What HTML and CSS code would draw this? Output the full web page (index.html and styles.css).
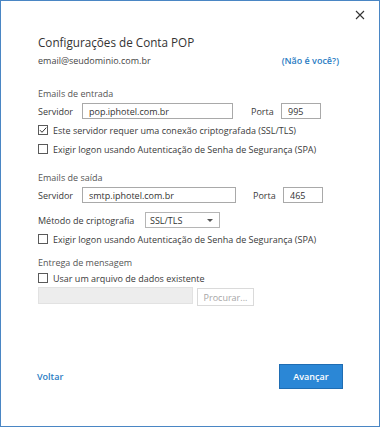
FILE: index.html
```html
<!DOCTYPE html>
<html lang="pt-BR">
<head>
    <meta charset="UTF-8">
    <title>Configurações de Conta POP</title>
    <link rel="stylesheet" href="styles.css">
</head>
<body>
    <div class="dialog">
        <div class="titlebar">
            <button class="close" title="Fechar">
                <svg width="10" height="10" viewBox="0 0 10 10"><path d="M1 1L9 9M9 1L1 9" stroke="#333" stroke-width="1.1" fill="none"/></svg>
            </button>
        </div>

        <div class="content">
            <h1 class="title">Configurações de Conta POP</h1>
            <div class="account">
                <span>email@seudominio.com.br</span>
                <a class="link" href="#">(Não é você?)</a>
            </div>

            <div class="section first">Emails de entrada</div>
            <div class="row">
                <span class="lbl lbl-server">Servidor</span>
                <input class="field field-server" value="pop.iphotel.com.br">
                <span class="lbl lbl-port">Porta</span>
                <input class="field field-port" value="995">
            </div>
            <label class="check">
                <span class="box checked">
                    <svg width="10" height="10" viewBox="0 0 10 10"><path d="M2 5.2L4 7.3L8.3 2.6" stroke="#333" stroke-width="1" fill="none"/></svg>
                </span>
                Este servidor requer uma conexão criptografada (SSL/TLS)
            </label>
            <label class="check">
                <span class="box"></span>
                Exigir logon usando Autenticação de Senha de Segurança (SPA)
            </label>

            <div class="section">Emails de saída</div>
            <div class="row">
                <span class="lbl lbl-server2">Servidor</span>
                <input class="field field-server2" value="smtp.iphotel.com.br">
                <span class="lbl lbl-port2">Porta</span>
                <input class="field field-port" value="465">
            </div>
            <div class="row row-method">
                <span class="lbl lbl-method">Método de criptografia</span>
                <div class="select">
                    <span>SSL/TLS</span>
                    <span class="arrow"></span>
                </div>
            </div>
            <label class="check check-smtp">
                <span class="box"></span>
                Exigir logon usando Autenticação de Senha de Segurança (SPA)
            </label>

            <div class="section section-delivery">Entrega de mensagem</div>
            <label class="check check-file">
                <span class="box"></span>
                Usar um arquivo de dados existente
            </label>
            <div class="file-row">
                <div class="file-path"></div>
                <button class="browse" disabled>Procurar...</button>
            </div>
        </div>

        <div class="footer">
            <a class="link back" href="#">Voltar</a>
            <button class="next">Avançar</button>
        </div>
    </div>
</body>
</html>
```

FILE: styles.css
```css
body {
    margin: 0;
    background: #fff;
    font-family: "Open Sans", "Noto Sans", sans-serif;
    font-size: 9px;
    color: #3a3a3a;
}
.dialog {
    width: 380px;
    height: 427px;
    box-sizing: border-box;
    border: 1px solid #4a86c4;
    background: #fff;
    display: flex;
    flex-direction: column;
}
.titlebar {
    height: 27px;
    display: flex;
    justify-content: flex-end;
    align-items: center;
    padding-right: 9px;
}
.close {
    width: 20px;
    height: 20px;
    padding: 0;
    border: none;
    background: transparent;
    display: flex;
    align-items: center;
    justify-content: center;
}
.content {
    padding: 4px 0 0 37px;
}
.title {
    margin: 0;
    height: 20px;
    line-height: 20px;
    font-size: 11.7px;
    font-weight: normal;
    color: #333;
}
.account {
    height: 16px;
    display: flex;
    align-items: center;
    justify-content: space-between;
    width: 301px;
    color: #444;
}
.link {
    color: #2a7cc3;
    font-weight: 600;
    text-decoration: none;
}
.section {
    height: 16px;
    line-height: 16px;
    margin-top: 13px;
    color: #555;
}
.section.first {
    margin-top: 18px;
}
.section-delivery {
    margin-top: 8px;
}
.row {
    height: 16px;
    display: flex;
    align-items: center;
    margin-top: 1px;
}
.row-method {
    margin-top: 9px;
}
.lbl {
    flex: none;
}
.lbl-server { width: 44px; }
.lbl-port { width: 30px; margin-left: 18px; }
.lbl-server2 { width: 44px; }
.lbl-port2 { width: 30px; margin-left: 17px; }
.lbl-method { width: 107px; }
.field {
    box-sizing: border-box;
    height: 16px;
    border: 1px solid #a9a9a9;
    padding: 0 0 0 6px;
    font-family: inherit;
    font-size: 9px;
    color: #333;
    outline: none;
}
.field-server { width: 151px; }
.field-server2 { width: 154px; }
.field-port { width: 40px; }
.select {
    box-sizing: border-box;
    width: 75px;
    height: 16px;
    border: 1px solid #b5b5b5;
    display: flex;
    align-items: center;
    justify-content: space-between;
    padding: 0 6px 0 4px;
    color: #333;
}
.arrow {
    width: 0;
    height: 0;
    border-left: 3px solid transparent;
    border-right: 3px solid transparent;
    border-top: 3px solid #555;
}
.check {
    height: 16px;
    display: flex;
    align-items: center;
    gap: 5px;
    margin-top: 3px;
    color: #3a3a3a;
}
.check-smtp { margin-top: 3px; }
.check-file { margin-top: -1px; }
.box {
    box-sizing: border-box;
    width: 10px;
    height: 10px;
    border: 1px solid #5a5a5a;
    flex: none;
    display: flex;
    align-items: center;
    justify-content: center;
}
.box svg {
    margin: -1px;
}
.file-row {
    display: flex;
    align-items: flex-start;
    gap: 4px;
    margin-top: 1px;
}
.file-path {
    width: 155px;
    height: 17px;
    box-sizing: border-box;
    background: #ededed;
    border: 1px solid #e2e2e2;
}
.browse {
    width: 57px;
    height: 18px;
    margin-top: 1px;
    box-sizing: border-box;
    background: #fff;
    border: 1px solid #dadada;
    color: #a6a6a6;
    font-family: inherit;
    font-size: 9px;
    padding: 0;
}
.footer {
    margin-top: auto;
    display: flex;
    justify-content: space-between;
    align-items: center;
    padding: 0 36px 37px 36px;
}
.next {
    width: 64px;
    height: 25px;
    box-sizing: border-box;
    background: #2b87d6;
    border: 1px solid #1f6db3;
    color: #fff;
    font-family: inherit;
    font-size: 9px;
    font-weight: 600;
    padding: 0;
}
```
